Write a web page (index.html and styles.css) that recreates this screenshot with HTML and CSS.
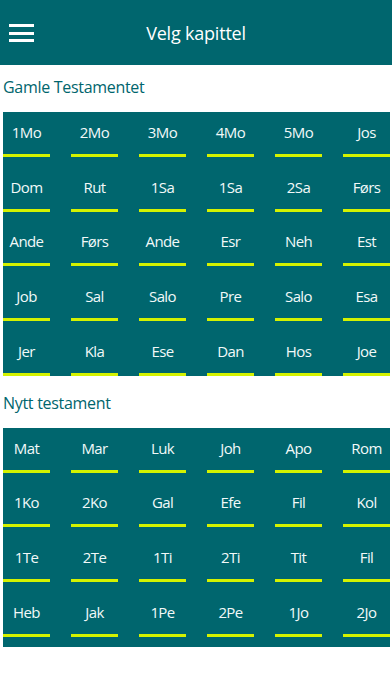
FILE: index.html
```html
<!DOCTYPE html>
<html lang="no">
<head>
    <meta charset="UTF-8">
    <meta name="viewport" content="width=device-width, initial-scale=1.0">
    <title>Velg kapittel</title>
    <link rel="stylesheet" href="styles.css">
</head>
<body>
    <header class="topbar">
        <button class="menu-btn" aria-label="Meny">
            <span></span><span></span><span></span>
        </button>
        <h1>Velg kapittel</h1>
    </header>

    <!-- Gamle Testamentet -->
    <section class="section">
        <h2 class="section-title">Gamle Testamentet</h2>
        <div class="book-grid">
            <div class="book">1Mo</div>
            <div class="book">2Mo</div>
            <div class="book">3Mo</div>
            <div class="book">4Mo</div>
            <div class="book">5Mo</div>
            <div class="book">Jos</div>
            <div class="book">Dom</div>
            <div class="book">Rut</div>
            <div class="book">1Sa</div>
            <div class="book">1Sa</div>
            <div class="book">2Sa</div>
            <div class="book">Førs</div>
            <div class="book">Ande</div>
            <div class="book">Førs</div>
            <div class="book">Ande</div>
            <div class="book">Esr</div>
            <div class="book">Neh</div>
            <div class="book">Est</div>
            <div class="book">Job</div>
            <div class="book">Sal</div>
            <div class="book">Salo</div>
            <div class="book">Pre</div>
            <div class="book">Salo</div>
            <div class="book">Esa</div>
            <div class="book">Jer</div>
            <div class="book">Kla</div>
            <div class="book">Ese</div>
            <div class="book">Dan</div>
            <div class="book">Hos</div>
            <div class="book">Joe</div>
        </div>
    </section>

    <!-- Nytt testament -->
    <section class="section">
        <h2 class="section-title">Nytt testament</h2>
        <div class="book-grid padded">
            <div class="book">Mat</div>
            <div class="book">Mar</div>
            <div class="book">Luk</div>
            <div class="book">Joh</div>
            <div class="book">Apo</div>
            <div class="book">Rom</div>
            <div class="book">1Ko</div>
            <div class="book">2Ko</div>
            <div class="book">Gal</div>
            <div class="book">Efe</div>
            <div class="book">Fil</div>
            <div class="book">Kol</div>
            <div class="book">1Te</div>
            <div class="book">2Te</div>
            <div class="book">1Ti</div>
            <div class="book">2Ti</div>
            <div class="book">Tit</div>
            <div class="book">Fil</div>
            <div class="book">Heb</div>
            <div class="book">Jak</div>
            <div class="book">1Pe</div>
            <div class="book">2Pe</div>
            <div class="book">1Jo</div>
            <div class="book">2Jo</div>
        </div>
    </section>
</body>
</html>
```

FILE: styles.css
```css
body {
    margin: 0;
    background: #fff;
    font-family: "Open Sans", "Noto Sans", sans-serif;
}

.topbar {
    height: 65px;
    background: #00666e;
    display: flex;
    align-items: center;
    justify-content: center;
    position: relative;
}
.topbar h1 {
    margin: 0;
    color: #fff;
    font-size: 18px;
    font-weight: normal;
    letter-spacing: -0.2px;
}

.menu-btn {
    position: absolute;
    left: 9px;
    top: 24px;
    width: 25px;
    padding: 0;
    border: none;
    background: none;
    display: flex;
    flex-direction: column;
    gap: 4.5px;
}
.menu-btn span {
    display: block;
    height: 3px;
    background: #fff;
}

.section + .section {
    margin-top: 5px;
}
.section-title {
    margin: 0;
    padding: 10px 3px 13px;
    line-height: 24px;
    font-size: 16px;
    font-weight: normal;
    letter-spacing: -0.3px;
    color: #00656d;
}

.book-grid {
    margin: 0 2px 0 3px;
    background: #00666e;
    display: grid;
    grid-template-columns: repeat(6, 47px);
    grid-auto-rows: 45px;
    column-gap: 21px;
    row-gap: 9.7px;
}
.book-grid.padded {
    padding-bottom: 10px;
}

.book {
    display: flex;
    align-items: center;
    justify-content: center;
    padding-bottom: 2px;
    border-bottom: 3px solid #d4f200;
    color: #f2f9f9;
    font-size: 15px;
    letter-spacing: -0.6px;
}
```
